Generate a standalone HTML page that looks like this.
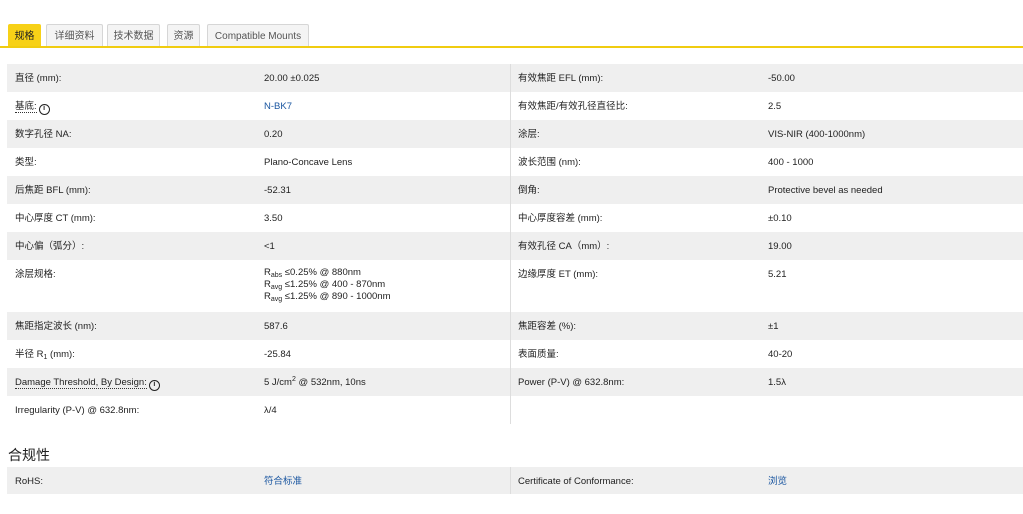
<!DOCTYPE html>
<html><head><meta charset="utf-8"><style>
*{margin:0;padding:0;box-sizing:border-box}
body{width:1023px;height:514px;background:#fff;font-family:"Liberation Sans","Noto Sans CJK SC",sans-serif;font-size:9.5px;color:#222;position:relative;overflow:hidden}
.tab{position:absolute;top:24px;height:23px;border:1px solid #d6d6d6;border-bottom:none;background:#f4f4f4;color:#555;font-size:10px;line-height:23px;text-align:center;border-radius:2px 2px 0 0}
.tab.on{background:#f7d117;border-color:#f7d117;color:#222}
.line{position:absolute;left:0;top:46px;width:1023px;height:2px;background:#f0cc10}
.row{position:absolute;left:7px;width:1016px;height:28px}
.row.g{background:#efefef}
.row>span{position:absolute;top:1px;line-height:28px;height:28px;white-space:nowrap}
.c1{left:8px}.c2{left:257px}.c3{left:511px}.c4{left:761px}
.sep{position:absolute;left:510px;top:64px;width:1px;height:360px;background:#ddd}
a{color:#1a56a0;text-decoration:none}
.u{border-bottom:1px dotted #333}
.i{display:inline-block;width:11px;height:11px;border:1.5px solid #222;border-radius:50%;font-size:7px;line-height:8px;text-align:center;font-weight:bold;vertical-align:-1px;margin-left:2px}
sub{font-size:7px;vertical-align:-2px;line-height:0}
sup{font-size:7px;line-height:0}
h2{position:absolute;left:8px;top:445px;font-size:14px;font-weight:normal;color:#222}
</style></head><body>
<div class="tab on" style="left:8px;width:33px">规格</div>
<div class="tab" style="left:46px;width:57px">详细资料</div>
<div class="tab" style="left:107px;width:53px">技术数据</div>
<div class="tab" style="left:167px;width:33px">资源</div>
<div class="tab" style="left:207px;width:102px">Compatible Mounts</div>
<div class="line"></div>

<div class="row g" style="top:64px"><span class="c1">直径 (mm):</span><span class="c2">20.00 ±0.025</span><span class="c3">有效焦距 EFL (mm):</span><span class="c4">-50.00</span></div>
<div class="row" style="top:92px"><span class="c1"><span class="u">基底:</span><span class="i">i</span></span><span class="c2"><a>N-BK7</a></span><span class="c3">有效焦距/有效孔径直径比:</span><span class="c4">2.5</span></div>
<div class="row g" style="top:120px"><span class="c1">数字孔径 NA:</span><span class="c2">0.20</span><span class="c3">涂层:</span><span class="c4">VIS-NIR (400-1000nm)</span></div>
<div class="row" style="top:148px"><span class="c1">类型:</span><span class="c2">Plano-Concave Lens</span><span class="c3">波长范围 (nm):</span><span class="c4">400 - 1000</span></div>
<div class="row g" style="top:176px"><span class="c1">后焦距 BFL (mm):</span><span class="c2">-52.31</span><span class="c3">倒角:</span><span class="c4">Protective bevel as needed</span></div>
<div class="row" style="top:204px"><span class="c1">中心厚度 CT (mm):</span><span class="c2">3.50</span><span class="c3">中心厚度容差 (mm):</span><span class="c4">±0.10</span></div>
<div class="row g" style="top:232px"><span class="c1">中心偏（弧分）:</span><span class="c2">&lt;1</span><span class="c3">有效孔径 CA（mm）:</span><span class="c4">19.00</span></div>
<div class="row" style="top:260px;height:52px"><span class="c1">涂层规格:</span><span class="c2" style="line-height:12px;top:7px;height:auto">R<sub>abs</sub> ≤0.25% @ 880nm<br>R<sub>avg</sub> ≤1.25% @ 400 - 870nm<br>R<sub>avg</sub> ≤1.25% @ 890 - 1000nm</span><span class="c3">边缘厚度 ET (mm):</span><span class="c4">5.21</span></div>
<div class="row g" style="top:312px"><span class="c1">焦距指定波长 (nm):</span><span class="c2">587.6</span><span class="c3">焦距容差 (%):</span><span class="c4">±1</span></div>
<div class="row" style="top:340px"><span class="c1">半径 R<sub>1</sub> (mm):</span><span class="c2">-25.84</span><span class="c3">表面质量:</span><span class="c4">40-20</span></div>
<div class="row g" style="top:368px"><span class="c1"><span class="u">Damage Threshold, By Design:</span><span class="i">i</span></span><span class="c2">5 J/cm<sup>2</sup> @ 532nm, 10ns</span><span class="c3">Power (P-V) @ 632.8nm:</span><span class="c4">1.5λ</span></div>
<div class="row" style="top:396px"><span class="c1">Irregularity (P-V) @ 632.8nm:</span><span class="c2">λ/4</span></div>
<div class="sep"></div>

<h2>合规性</h2>
<div class="row g" style="top:467px;height:27px"><span class="c1">RoHS:</span><span class="c2"><a>符合标准</a></span><span class="c3">Certificate of Conformance:</span><span class="c4"><a>浏览</a></span></div>
<div style="position:absolute;left:510px;top:467px;width:1px;height:27px;background:#ddd"></div>
</body></html>
